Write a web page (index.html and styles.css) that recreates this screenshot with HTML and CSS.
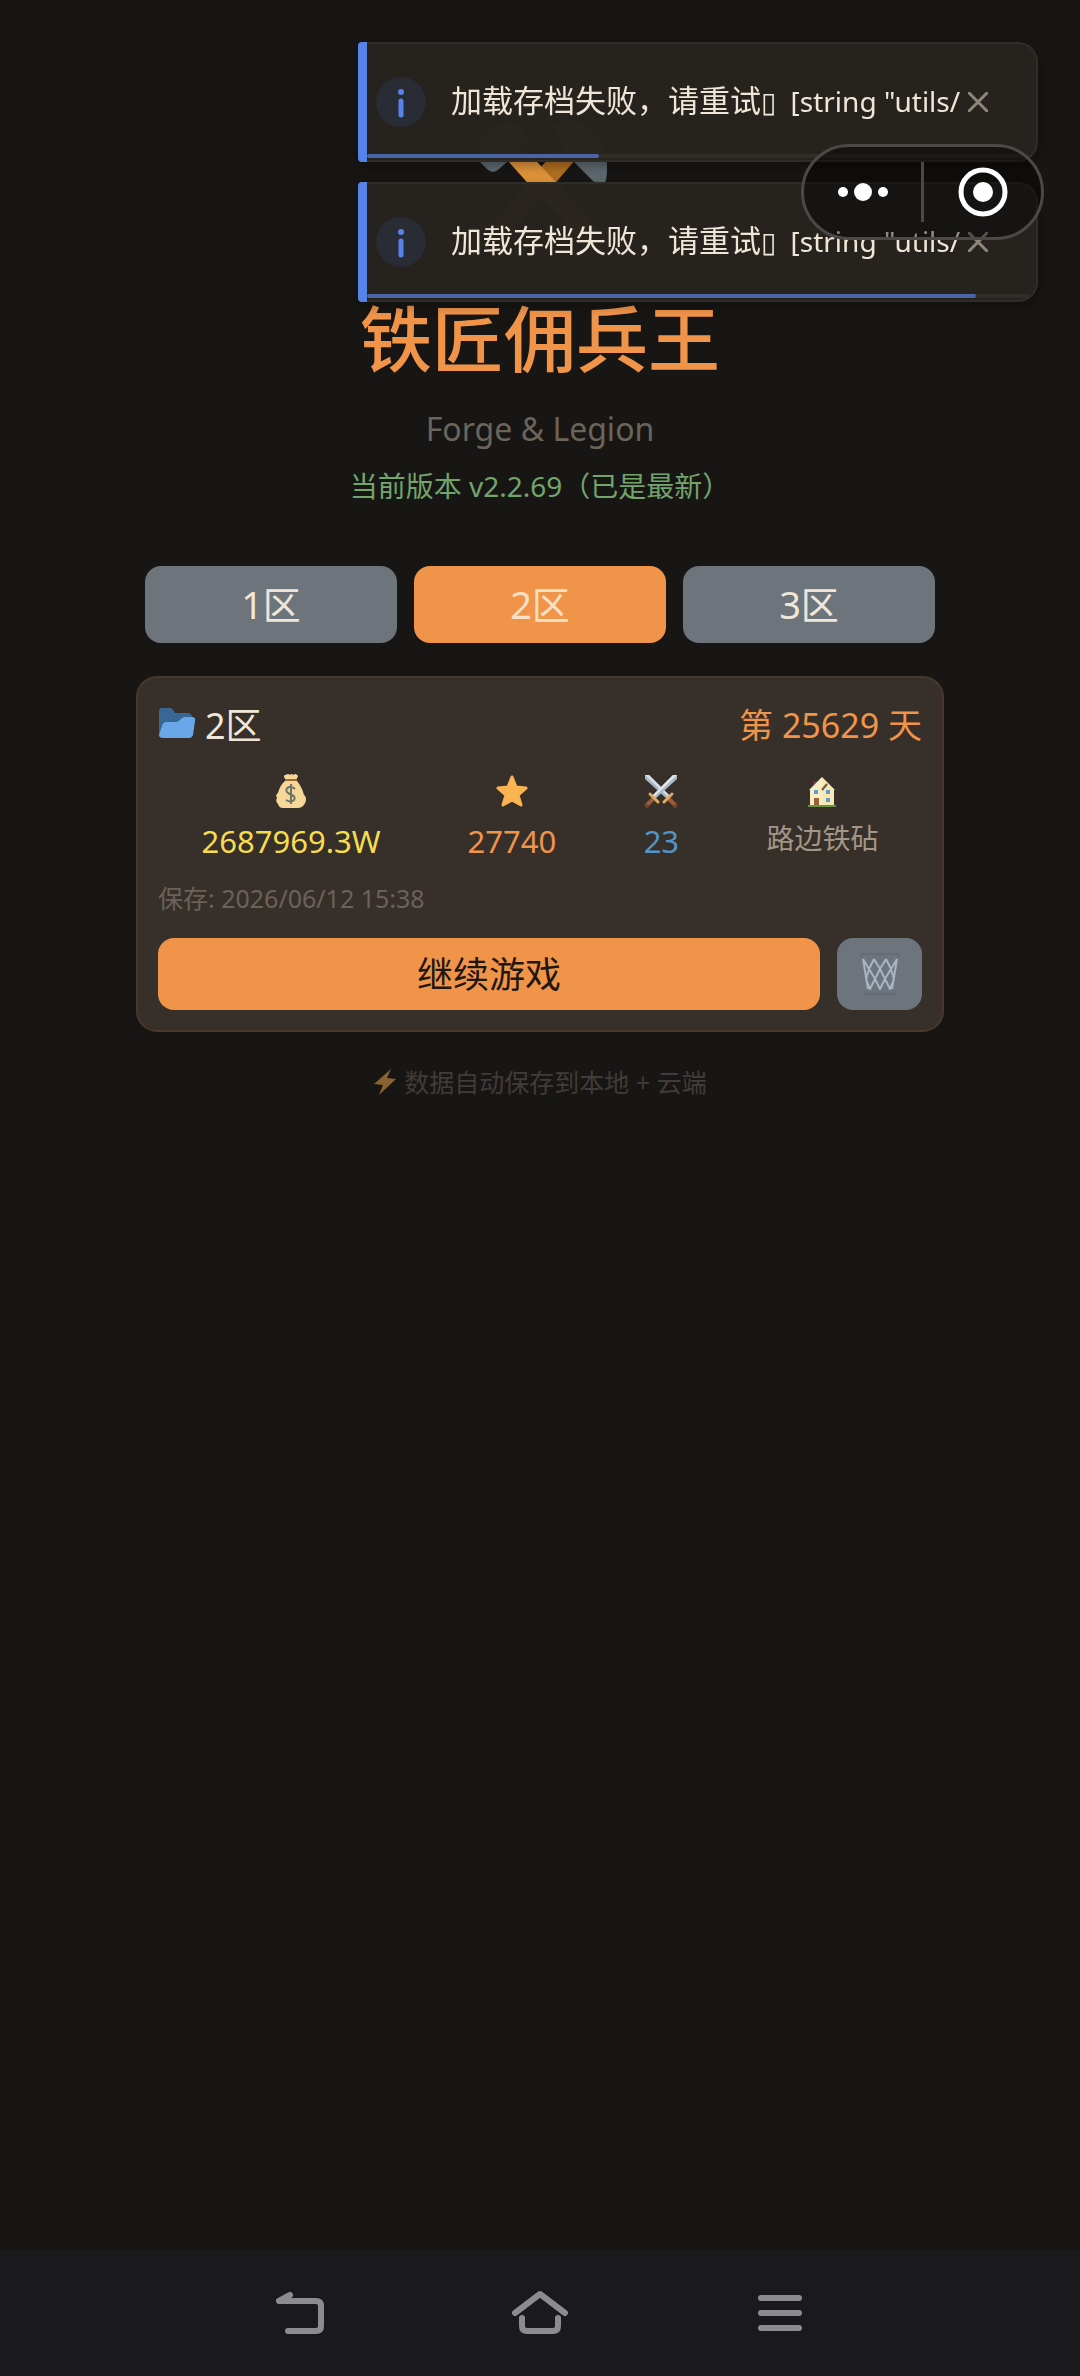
FILE: index.html
```html
<!DOCTYPE html>
<html lang="zh-CN">
<head>
    <meta charset="UTF-8">
    <meta name="viewport" content="width=device-width, initial-scale=1.0">
    <title>铁匠佣兵王</title>
    <link rel="stylesheet" href="styles.css">
</head>
<body>
    <main class="screen">
        <!-- Title -->
        <header class="hero">
            <svg class="hero-icon" viewBox="0 0 128 128" aria-hidden="true">
                <path d="M4 50Q-2 34 10 20Q24 4 46 14L54 30L31 50L23 57Q17 63 11 57Z" fill="#5d686f"/>
                <path d="M76 12Q104 2 122 22Q132 36 131 58Q131 66 129 71Q122 73 117 69L88 40Z" fill="#5d686f"/>
                <path d="M78 40H106L32 126L16 112Z" fill="#b06f20"/>
                <path d="M24 40H52L124 118L108 134Z" fill="#e0933a"/>
            </svg>
            <h1 class="title">铁匠佣兵王</h1>
            <p class="subtitle">Forge &amp; Legion</p>
            <p class="version">当前版本 v2.2.69（已是最新）</p>
        </header>

        <!-- Server Tabs -->
        <div class="tabs">
            <button class="tab">1区</button>
            <button class="tab active">2区</button>
            <button class="tab">3区</button>
        </div>

        <!-- Save Card -->
        <section class="card">
            <div class="card-head">
                <h2 class="card-title">
                    <svg class="folder-icon" viewBox="0 0 38 32" aria-hidden="true">
                        <path d="M1 28V4Q1 1 4 1H12Q14 1 15 3L17 6H30Q34 6 34 11V24H4Z" fill="#386695"/>
                        <path d="M4 19Q5 15 8 15H18Q20 15 22 13L24 11Q25 10 28 10H34Q38 10 37 14L35 28Q34 31 31 31H5Q1 31 1 28Z" fill="#69a7e8"/>
                    </svg>
                    2区
                </h2>
                <span class="day">第 25629 天</span>
            </div>

            <div class="stats">
                <div class="stat">
                    <svg class="stat-icon" viewBox="0 0 36 36" aria-hidden="true">
                        <path d="M12 9Q13 7 11 5Q11 2 13 3Q15 1 17 3Q19 1 20 3Q23 1 24 3Q26 4 24 6Q23 8 24 9Q29 15 31 23Q33 24 33 28Q33 31 30 34Q28 36 25 36H10Q6 36 5 32Q2 29 4 26Q2 23 5 21Q7 13 12 9Z" fill="#f6d797"/>
                        <path d="M12 8H24" stroke="#9d6837" stroke-width="2"/>
                        <path d="M22 17Q19 14 16 15Q12 17 14 20Q16 22 19 23Q23 25 21 28Q18 31 13 28M18 12V32" fill="none" stroke="#6b7467" stroke-width="2"/>
                    </svg>
                    <span class="stat-value gold">2687969.3W</span>
                </div>
                <div class="stat">
                    <svg class="stat-icon" viewBox="0 0 36 36" aria-hidden="true">
                        <path d="M18 5L22 15L32 16L24 23L27 33L18 28L9 33L12 23L4 16L14 15Z" fill="#fbb550" stroke="#fbb550" stroke-width="3" stroke-linejoin="round"/>
                    </svg>
                    <span class="stat-value orange">27740</span>
                </div>
                <div class="stat">
                    <svg class="stat-icon" viewBox="0 0 36 36" aria-hidden="true">
                        <path d="M2 3H6L27 24L24 27L2 7Z" fill="#a9b6c0"/>
                        <path d="M2 3H6L27 24L25 25Z" fill="#d6e0e8"/>
                        <path d="M34 3H30L9 24L12 27L34 7Z" fill="#aab8c4"/>
                        <path d="M34 3H30L9 24L11 25Z" fill="#dce7ee"/>
                        <path d="M10 27L4 33M26 27L32 33" stroke="#9c5c38" stroke-width="4" stroke-linecap="round"/>
                        <path d="M7 22L15 30M29 22L21 30" stroke="#e0ad60" stroke-width="3" stroke-linecap="round"/>
                        <circle cx="4" cy="34" r="2" fill="#7a452c"/>
                        <circle cx="32" cy="34" r="2" fill="#7a452c"/>
                    </svg>
                    <span class="stat-value blue">23</span>
                </div>
                <div class="stat">
                    <svg class="stat-icon" viewBox="0 0 36 36" aria-hidden="true">
                        <path d="M9 9H13V15H9Z" fill="#7d3038"/>
                        <path d="M6 17L18 5L30 17V34H6Z" fill="#f9edc1"/>
                        <path d="M18 5L30 17V34H18Z" fill="#f7e7b2"/>
                        <path d="M5 18L18 5L31 18" fill="none" stroke="#9b9389" stroke-width="1"/>
                        <path d="M18 18L23 12" stroke="#6b5b52" stroke-width="2"/>
                        <path d="M10 18H14V22H10ZM22 18H26V22H22ZM22 26H26V30H22Z" fill="#5e9bd0"/>
                        <path d="M10 26H15V33H10Z" fill="#9c6038"/>
                        <path d="M4 34H32" stroke="#6a9347" stroke-width="2"/>
                    </svg>
                    <span class="stat-value place">路边铁砧</span>
                </div>
            </div>

            <p class="saved-at">保存: 2026/06/12 15:38</p>

            <div class="actions">
                <button class="continue-button">继续游戏</button>
                <button class="delete-button" aria-label="删除存档">
                    <svg class="trash-icon" viewBox="0 0 40 42" aria-hidden="true">
                        <path d="M1 4V1H39V4M5 38V41H35V38" fill="none" stroke="#5b646c"/>
                        <path d="M3 6L9 16L15 26L20 36L25 26L31 16L37 6M14 6L9 16L6 26L10 36L15 26L20 16L26 6M26 6L31 16L34 26L30 36L25 26L20 16L14 6M3 6L8 36M37 6L32 36" fill="none" stroke="#a4b6c2" stroke-width="2" stroke-linejoin="round"/>
                    </svg>
                </button>
            </div>
        </section>

        <p class="note">
            <svg class="bolt-icon" viewBox="0 0 24 28" aria-hidden="true">
                <path d="M18 1L1 16L10 17L6 27L23 11L14 10Z" fill="#8a622e"/>
            </svg>
            数据自动保存到本地 + 云端
        </p>
    </main>

    <!-- System Navigation -->
    <nav class="system-nav">
        <button class="nav-button" aria-label="返回">
            <svg viewBox="0 0 60 60" aria-hidden="true">
                <path d="M20 12L9 18H46Q51 18 51 23V43Q51 48 46 48H18" fill="none"/>
            </svg>
        </button>
        <button class="nav-button" aria-label="主页">
            <svg viewBox="0 0 60 60" aria-hidden="true">
                <path d="M5 30L30 11L55 30M12 35V43Q12 48 17 48H43Q48 48 48 43V35" fill="none"/>
            </svg>
        </button>
        <button class="nav-button" aria-label="菜单">
            <svg viewBox="0 0 60 60" aria-hidden="true">
                <path d="M11 15H49M11 30H49M11 45H49" fill="none"/>
            </svg>
        </button>
    </nav>

    <!-- Toasts -->
    <div class="toasts">
        <div class="toast" role="status">
            <svg class="toast-icon" viewBox="0 0 50 50" aria-hidden="true">
                <circle cx="25" cy="25" r="25" fill="#292b35"/>
                <circle cx="25" cy="15" r="3" fill="#5783e8"/>
                <path d="M25 24V38" stroke="#5783e8" stroke-width="5" stroke-linecap="round"/>
            </svg>
            <span class="toast-text">加载存档失败，请重试<span class="toast-trace">▯&nbsp; [string "utils/</span></span>
            <button class="toast-close" aria-label="关闭">
                <svg viewBox="0 0 20 20" aria-hidden="true">
                    <path d="M1 1L19 19M19 1L1 19"/>
                </svg>
            </button>
            <div class="toast-track"><div class="toast-progress" style="width: 35%"></div></div>
        </div>
        <div class="toast" role="status">
            <svg class="toast-icon" viewBox="0 0 50 50" aria-hidden="true">
                <circle cx="25" cy="25" r="25" fill="#292b35"/>
                <circle cx="25" cy="15" r="3" fill="#5783e8"/>
                <path d="M25 24V38" stroke="#5783e8" stroke-width="5" stroke-linecap="round"/>
            </svg>
            <span class="toast-text">加载存档失败，请重试<span class="toast-trace">▯&nbsp; [string "utils/</span></span>
            <button class="toast-close" aria-label="关闭">
                <svg viewBox="0 0 20 20" aria-hidden="true">
                    <path d="M1 1L19 19M19 1L1 19"/>
                </svg>
            </button>
            <div class="toast-track"><div class="toast-progress" style="width: 92%"></div></div>
        </div>
    </div>

    <!-- Mini Program Capsule -->
    <div class="capsule">
        <button class="capsule-button" aria-label="更多">
            <svg class="dots-icon" viewBox="0 0 52 18" aria-hidden="true">
                <circle cx="6" cy="9" r="5"/>
                <circle cx="26" cy="9" r="9"/>
                <circle cx="46" cy="9" r="5"/>
            </svg>
        </button>
        <button class="capsule-button" aria-label="退出">
            <svg class="exit-icon" viewBox="0 0 50 50" aria-hidden="true">
                <circle cx="25" cy="25" r="22" fill="none" stroke="#fff" stroke-width="5"/>
                <circle cx="25" cy="25" r="10"/>
            </svg>
        </button>
    </div>
</body>
</html>
```

FILE: styles.css
```css
* {
    margin: 0;
    padding: 0;
    box-sizing: border-box;
}

body {
    display: flex;
    flex-direction: column;
    min-height: 100vh;
    background: #181614;
    color: #f0e6d8;
    font-family: 'Noto Sans', 'Noto Sans CJK SC', sans-serif;
}

button {
    border: none;
    background: none;
    color: inherit;
    font-family: inherit;
    cursor: pointer;
}

svg {
    display: block;
}

.screen {
    flex: 1;
    width: 100%;
    max-width: 808px;
    margin: 0 auto;
    padding-top: 112px;
}

/* Title */
.hero {
    display: flex;
    flex-direction: column;
    align-items: center;
    margin-bottom: 60px;
}

.hero-icon {
    width: 128px;
    height: 128px;
    margin-bottom: 48px;
    overflow: visible;
}

.title {
    font-size: 72px;
    font-weight: 500;
    line-height: 100px;
    color: #f0944a;
}

.subtitle {
    margin-top: 17px;
    font-size: 32px;
    line-height: 48px;
    color: #6b645b;
}

.version {
    margin-top: 13px;
    font-size: 28px;
    line-height: 40px;
    color: #72a56c;
}

/* Server Tabs */
.tabs {
    display: flex;
    gap: 17px;
    padding: 0 9px;
    margin-bottom: 33px;
}

.tab {
    flex: 1;
    height: 77px;
    padding-bottom: 2px;
    border-radius: 16px;
    background: #6e747c;
    font-size: 38px;
    line-height: 56px;
}

.tab.active {
    background: #f0944a;
    color: #fae0c4;
}

/* Save Card */
.card {
    padding: 20px;
    border: 2px solid #49382a;
    border-radius: 21px;
    background: #372f29;
}

.card-head {
    display: flex;
    justify-content: space-between;
    align-items: center;
    height: 50px;
    font-size: 34px;
}

.card-title {
    display: flex;
    align-items: center;
    gap: 9px;
    font-size: 36px;
    font-weight: 400;
}

.folder-icon {
    width: 38px;
    height: 32px;
}

.day {
    color: #f0944a;
}

.stats {
    display: flex;
    justify-content: space-around;
    margin-top: 24px;
}

.stat {
    display: flex;
    flex-direction: column;
    align-items: center;
    gap: 12px;
}

.stat-icon {
    width: 36px;
    height: 36px;
}

.stat-value {
    font-size: 31px;
    line-height: 42px;
}

.gold {
    color: #f6dd4f;
}

.orange {
    color: #f0944a;
}

.blue {
    color: #5294c6;
}

.place {
    font-size: 28px;
    line-height: 36px;
    color: #a19688;
}

.saved-at {
    margin-top: 18px;
    font-size: 25px;
    line-height: 36px;
    color: #6b6259;
}

.actions {
    display: flex;
    gap: 17px;
    margin-top: 22px;
}

.continue-button {
    flex: 1;
    height: 72px;
    padding-bottom: 4px;
    border-radius: 16px;
    background: #f0944a;
    color: #1f1710;
    font-size: 36px;
}

.delete-button {
    display: flex;
    align-items: center;
    justify-content: center;
    width: 85px;
    border-radius: 16px;
    background: #6e747c;
}

.trash-icon {
    width: 40px;
    height: 42px;
}

.note {
    display: flex;
    align-items: center;
    justify-content: center;
    gap: 7px;
    margin-top: 32px;
    font-size: 25px;
    line-height: 36px;
    color: #413c37;
}

.bolt-icon {
    width: 24px;
    height: 28px;
}

/* System Navigation */
.system-nav {
    display: flex;
    align-items: center;
    justify-content: center;
    gap: 180px;
    height: 126px;
    background: #1a1a1c;
}

.nav-button svg {
    width: 60px;
    height: 60px;
    stroke: #8c8c8e;
    stroke-width: 6;
    stroke-linecap: round;
    stroke-linejoin: round;
}

/* Toasts */
.toasts {
    position: fixed;
    top: 42px;
    right: 42px;
    display: flex;
    flex-direction: column;
    gap: 20px;
    width: 680px;
    max-width: calc(100% - 84px);
}

.toast {
    position: relative;
    display: flex;
    align-items: center;
    height: 120px;
    padding: 0 48px 0 18px;
    border: 2px solid #302c28;
    border-left: none;
    border-radius: 4px 20px 20px 4px;
    background: rgba(39, 35, 31, 0.98);
    box-shadow: 0 4px 12px rgba(0, 0, 0, 0.3);
}

.toast::before {
    content: '';
    position: absolute;
    top: -2px;
    bottom: -2px;
    left: 0;
    width: 9px;
    border-radius: 4px 0 0 4px;
    background: #5783e8;
}

.toast-icon {
    flex: none;
    width: 50px;
    height: 50px;
    margin-right: 25px;
}

.toast-text {
    flex: 1;
    min-width: 0;
    padding-bottom: 4px;
    overflow: hidden;
    font-size: 31px;
    line-height: 44px;
    white-space: nowrap;
}

.toast-trace {
    font-size: 28px;
}

.toast-close {
    flex: none;
    margin-left: 6px;
}

.toast-close svg {
    width: 20px;
    height: 20px;
    stroke: #8f867a;
    stroke-width: 3;
    stroke-linecap: round;
}

.toast-track {
    position: absolute;
    left: 9px;
    right: 7px;
    bottom: 2px;
    height: 4px;
    border-radius: 2px;
    background: #302c28;
}

.toast-progress {
    height: 100%;
    border-radius: 2px;
    background: #4a64a8;
}

/* Mini Program Capsule */
.capsule {
    position: fixed;
    top: 144px;
    right: 36px;
    display: flex;
    align-items: center;
    width: 243px;
    height: 96px;
    border: 3px solid #4b4846;
    border-radius: 48px;
    background: rgba(0, 0, 0, 0.4);
}

.capsule-button {
    display: flex;
    flex: 1;
    align-items: center;
    justify-content: center;
    height: 60px;
}

.capsule-button + .capsule-button {
    border-left: 3px solid #4b4846;
}

.capsule svg {
    fill: #fff;
}

.dots-icon {
    width: 52px;
    height: 18px;
}

.exit-icon {
    width: 50px;
    height: 50px;
}
```
